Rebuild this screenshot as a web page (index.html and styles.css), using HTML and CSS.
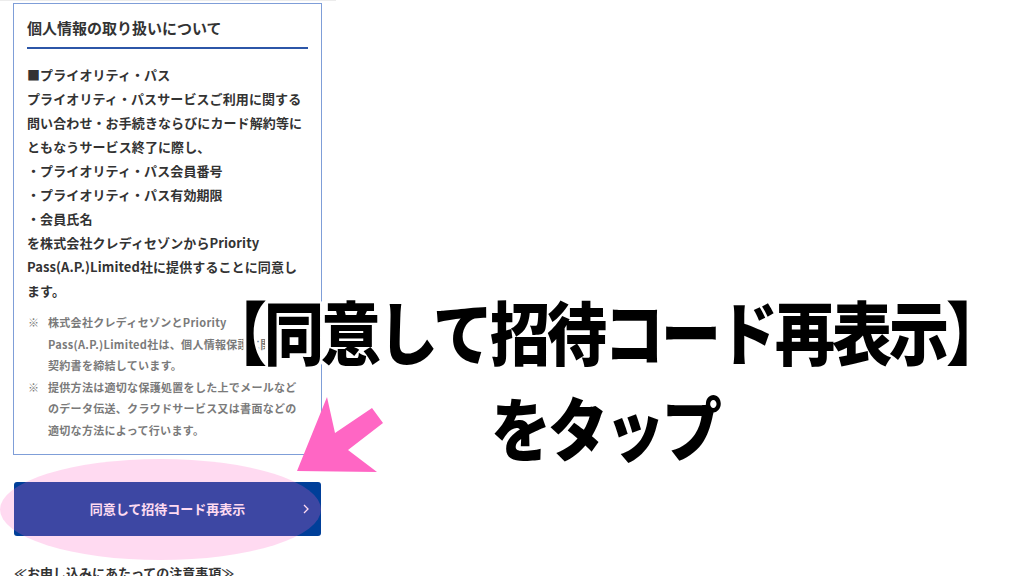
FILE: index.html
```html
<!DOCTYPE html>
<html lang="ja">
<head>
  <meta charset="UTF-8">
  <title>同意して招待コード再表示をタップ</title>
  <link rel="stylesheet" href="styles.css">
</head>
<body>

  <div class="slide">
    <div class="phone">
      <div class="kojin">
        <h2 class="kojin-title">個人情報の取り扱いについて</h2>
        <p class="kojin-text">
          ■プライオリティ・パス<br>
          プライオリティ・パスサービスご利用に関する<br>
          問い合わせ・お手続きならびにカード解約等に<br>
          ともなうサービス終了に際し、<br>
          ・プライオリティ・パス会員番号<br>
          ・プライオリティ・パス有効期限<br>
          ・会員氏名<br>
          を株式会社クレディセゾンからPriority<br>
          Pass(A.P.)Limited社に提供することに同意し<br>
          ます。
        </p>
        <ul class="chui">
          <li><span class="kome">※</span><span>株式会社クレディセゾンとPriority<br>Pass(A.P.)Limited社は、個人情報保護に関する<br>契約書を締結しています。</span></li>
          <li><span class="kome">※</span><span>提供方法は適切な保護処置をした上でメールなど<br>のデータ伝送、クラウドサービス又は書面などの<br>適切な方法によって行います。</span></li>
        </ul>
      </div>

      <a class="botao" href="#">
        同意して招待コード再表示
        <svg class="seta-botao" width="6" height="10" viewBox="0 0 6 10">
          <polyline points="1,1 5,5 1,9" fill="none" stroke="#fff" stroke-width="1.3"/>
        </svg>
      </a>

      <div class="proximo">≪お申し込みにあたっての注意事項≫</div>

      <!-- destaque rosa por cima do botao -->
      <div class="destaque"></div>
    </div>

    <div class="legenda">
      <div>【同意して招待コード再表示】</div>
      <div>をタップ</div>
    </div>

    <svg class="flecha" width="100" height="90" viewBox="290 390 100 90">
      <polygon points="297,471 327,397 335,433 372,408 383,423 348,450 377,472" fill="#ff66c4"/>
    </svg>
  </div>

</body>
</html>
```

FILE: styles.css
```css
body {
  margin: 0;
  background-color: #fff;
  font-family: "Noto Sans CJK JP", "Noto Sans", sans-serif;
}

.slide {
  position: relative;
  width: 1024px;
  height: 576px;
  overflow: hidden;
}

.phone {
  position: relative;
  width: 336px;
  height: 576px;
  border-top: 1px solid #ececec;
  box-sizing: border-box;
  overflow: hidden;
}

.kojin {
  margin: 2px 0 0 13px;
  width: 309px;
  box-sizing: border-box;
  border: 1px solid #7f9ed8;
  padding: 13px 13px 12px 13px;
  color: #333;
}

.kojin-title {
  margin: 0;
  font-size: 15px;
  line-height: 22px;
  font-weight: 700;
  padding-bottom: 8px;
  border-bottom: 2px solid #2c56a8;
}

.kojin-text {
  margin: 14px 0 0 0;
  font-size: 13px;
  line-height: 24px;
  font-weight: 700;
  letter-spacing: 0.1px;
}

.chui {
  list-style: none;
  margin: 9px 0 0 0;
  padding: 0;
  color: #7a7a7a;
  font-size: 11px;
  line-height: 21.6px;
  font-weight: 700;
  letter-spacing: 0.3px;
}

.chui li {
  display: flex;
}

.kome {
  width: 20px;
  flex-shrink: 0;
  padding-left: 1px;
}

.botao {
  margin: 27px 0 0 14px;
  width: 307px;
  height: 54px;
  border-radius: 3px;
  background-color: #003f99;
  color: #fff;
  font-size: 13px;
  font-weight: 700;
  text-decoration: none;
  display: flex;
  align-items: center;
  justify-content: center;
  position: relative;
}

.seta-botao {
  position: absolute;
  right: 12px;
  top: 22px;
}

.proximo {
  margin: 27px 0 0 14px;
  font-size: 13px;
  font-weight: 700;
  color: #333;
  line-height: 20px;
}

.destaque {
  position: absolute;
  left: 0;
  top: 458px;
  width: 321px;
  height: 101px;
  border-radius: 50%;
  background-color: rgba(255, 102, 196, 0.24);
}

.legenda {
  position: absolute;
  left: 205px;
  top: 282px;
  width: 800px;
  text-align: center;
  font-family: "Noto Sans CJK JP", sans-serif;
  font-weight: 900;
  font-size: 60px;
  line-height: 83px;
  letter-spacing: -3px;
  color: #000;
  transform: scaleY(1.15);
  transform-origin: top center;
  text-shadow:
    3px 0 0 #fff, -3px 0 0 #fff, 0 3px 0 #fff, 0 -3px 0 #fff,
    2px 2px 0 #fff, -2px 2px 0 #fff, 2px -2px 0 #fff, -2px -2px 0 #fff;
}

.flecha {
  position: absolute;
  left: 290px;
  top: 390px;
}
```
